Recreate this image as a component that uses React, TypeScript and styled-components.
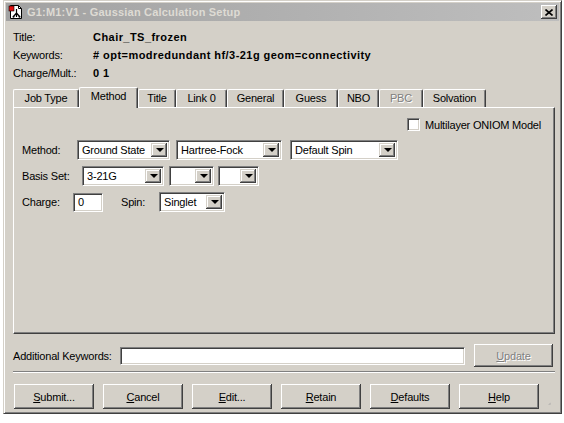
import React from 'react'
import styled, { createGlobalStyle } from 'styled-components'

const GlobalStyle = createGlobalStyle`
    html, body {
        margin: 0;
        padding: 0;
        background: #ffffff;
    }
    body {
        font-family: "Liberation Sans", Arial, sans-serif;
        font-size: 11px;
        letter-spacing: -0.2px;
        color: #000;
    }
`

const face = '#d4d0c8'
const shadow = '#808080'
const dark = '#404040'

const Window = styled.div`
    box-sizing: border-box;
    width: 559px;
    height: 414px;
    margin-left: 3px;
    background: ${face};
    border: 1px solid;
    border-color: ${face} ${dark} ${dark} ${face};
    box-shadow: inset 1px 1px #fff, inset -1px -1px ${shadow};
    padding: 2px;
    display: flex;
    flex-direction: column;
`
const TitleBar = styled.div`
    height: 18px;
    display: flex;
    align-items: center;
    padding: 0 2px 0 2px;
    background: linear-gradient(to right, #a2a2a2, #bebebe);
    color: #dedbd4;
    font-family: "Liberation Sans", Tahoma, sans-serif;
    font-weight: bold;
    font-size: 11px;
    gap: 3px;
`
const TitleText = styled.span`
    flex: 1;
    letter-spacing: 0.2px;
`
const CloseBox = styled.div`
    width: 16px;
    height: 14px;
    background: ${face};
    box-shadow: inset -1px -1px ${dark}, inset 1px 1px #fff, inset -2px -2px ${shadow};
    display: flex;
    align-items: center;
    justify-content: center;
`
const Body = styled.div`
    flex: 1;
    display: flex;
    flex-direction: column;
    padding: 7px 4px 0 7px;
`
const InfoGrid = styled.div`
    display: grid;
    grid-template-columns: 80px 1fr;
    grid-auto-rows: 18px;
    align-items: center;
`
const InfoValue = styled.span`
    font-weight: bold;
    letter-spacing: 0.45px;
`
const TabStrip = styled.div`
    display: flex;
    align-items: flex-end;
    height: 20px;
    margin-top: 5px;
    position: relative;
    z-index: 1;
`
const Tab = styled.div<{ $w: number; $active?: boolean; $off?: boolean }>`
    box-sizing: border-box;
    width: ${p => p.$w}px;
    height: ${p => (p.$active ? 21 : 18)}px;
    margin-bottom: ${p => (p.$active ? -1 : 0)}px;
    background: ${face};
    border-radius: 2px 2px 0 0;
    border-top: 1px solid #fff;
    border-left: 1px solid #fff;
    border-right: 1px solid ${dark};
    box-shadow: inset -1px 0 ${shadow};
    display: flex;
    justify-content: center;
    padding-top: 2px;
    color: ${p => (p.$off ? shadow : '#000')};
    text-shadow: ${p => (p.$off ? '1px 1px #fff' : 'none')};
`
const Panel = styled.div`
    box-sizing: border-box;
    width: 542px;
    height: 227px;
    border: 1px solid;
    border-color: #fff ${dark} ${dark} #fff;
    box-shadow: inset -1px -1px ${shadow};
    display: flex;
    flex-direction: column;
    padding: 10px 0 0 8px;
`
const CheckRow = styled.label`
    display: flex;
    align-items: center;
    gap: 5px;
    padding-left: 385px;
    height: 13px;
`
const CheckBox = styled.span`
    box-sizing: border-box;
    width: 13px;
    height: 13px;
    background: #fff;
    border: 1px solid;
    border-color: ${shadow} #fff #fff ${shadow};
    box-shadow: inset 1px 1px ${dark}, inset -1px -1px ${face};
`
const Rows = styled.div`
    display: flex;
    flex-direction: column;
    gap: 6px;
    margin-top: 9px;
`
const Row = styled.div`
    display: flex;
    align-items: center;
    height: 20px;
`
const Label = styled.span<{ $w: number }>`
    width: ${p => p.$w}px;
    flex-shrink: 0;
`
const Sunken = styled.div<{ $w: number; $h?: number }>`
    box-sizing: border-box;
    width: ${p => p.$w}px;
    height: ${p => p.$h ?? 20}px;
    background: #fff;
    border: 1px solid;
    border-color: ${shadow} #fff #fff ${shadow};
    box-shadow: inset 1px 1px ${dark}, inset -1px -1px ${face};
    display: flex;
    align-items: center;
    padding: 2px;
    flex-shrink: 0;
`
const ComboText = styled.span`
    flex: 1;
    padding-left: 2px;
    white-space: nowrap;
    overflow: hidden;
`
const DropButton = styled.span`
    width: 16px;
    height: 100%;
    background: ${face};
    box-shadow: inset -1px -1px ${dark}, inset 1px 1px ${face}, inset -2px -2px ${shadow}, inset 2px 2px #fff;
    display: flex;
    align-items: center;
    justify-content: center;
    &::after {
        content: '';
        border-left: 4px solid transparent;
        border-right: 4px solid transparent;
        border-top: 4px solid #000;
        margin-left: 1px;
    }
`
const Gap = styled.span<{ $w: number }>`
    width: ${p => p.$w}px;
    flex-shrink: 0;
`
const KeywordRow = styled.div`
    display: flex;
    align-items: center;
    height: 23px;
    margin-top: 10px;
`
const WinButton = styled.button<{ $w: number; $h: number; $off?: boolean }>`
    box-sizing: border-box;
    width: ${p => p.$w}px;
    height: ${p => p.$h}px;
    padding: 0;
    border: none;
    background: ${face};
    box-shadow: inset -1px -1px ${dark}, inset 1px 1px #fff, inset -2px -2px ${shadow}, inset 2px 2px ${face};
    font-family: "Liberation Sans", Arial, sans-serif;
    font-size: 11px;
    letter-spacing: -0.2px;
    color: ${p => (p.$off ? shadow : '#000')};
    text-shadow: ${p => (p.$off ? '1px 1px #fff' : 'none')};
    flex-shrink: 0;
    u { text-decoration: underline; }
`
const Separator = styled.div`
    width: 542px;
    height: 0;
    border-top: 1px solid ${shadow};
    border-bottom: 1px solid #fff;
    margin-top: 4px;
`
const ButtonRow = styled.div`
    display: flex;
    align-items: flex-end;
    gap: 9px;
    padding-left: 1px;
    margin-top: 11px;
`
const Grip = styled.svg`
    margin-left: auto;
    margin-right: 4px;
    margin-bottom: -1px;
`

function AppIcon() {
    return (
        <svg width="16" height="16" viewBox="0 0 16 16">
            <path d="M2.5 1.5h8l3 3v10h-11z" fill="#fff" stroke="#000" />
            <path d="M10.5 1.5v3h3" fill="none" stroke="#000" />
            <rect x="1" y="2" width="5" height="5" fill="#e01010" stroke="#000" strokeWidth="0.6" />
            <path d="M8.5 5v4M8.5 9l-3 3.5M8.5 9l3 3.5M8.5 9v4" stroke="#000" strokeWidth="1.2" fill="none" />
            <circle cx="5.5" cy="12.8" r="1" fill="#000" />
            <circle cx="11.5" cy="12.8" r="1" fill="#000" />
        </svg>
    )
}

function Combo({ w, value }: { w: number; value?: string }) {
    return (
        <Sunken $w={w}>
            <ComboText>{value}</ComboText>
            <DropButton />
        </Sunken>
    )
}

const tabs = [
    { name: 'Job Type', w: 66 },
    { name: 'Method', w: 59, active: true },
    { name: 'Title', w: 38 },
    { name: 'Link 0', w: 51 },
    { name: 'General', w: 57 },
    { name: 'Guess', w: 54 },
    { name: 'NBO', w: 41 },
    { name: 'PBC', w: 44, off: true },
    { name: 'Solvation', w: 63 },
]

const buttons = [
    { key: 'S', rest: 'ubmit...' },
    { key: 'C', rest: 'ancel' },
    { key: 'E', rest: 'dit...' },
    { key: 'R', rest: 'etain' },
    { key: 'D', rest: 'efaults' },
    { key: 'H', rest: 'elp' },
]

export default function App() {
    return (
        <>
            <GlobalStyle />
            <Window>
                <TitleBar>
                    <AppIcon />
                    <TitleText>G1:M1:V1 - Gaussian Calculation Setup</TitleText>
                    <CloseBox>
                        <svg width="8" height="7" viewBox="0 0 8 7">
                            <path d="M0.5 0.5l7 6M7.5 0.5l-7 6" stroke="#000" strokeWidth="1.6" />
                        </svg>
                    </CloseBox>
                </TitleBar>
                <Body>
                    <InfoGrid>
                        <span>Title:</span>
                        <InfoValue>Chair_TS_frozen</InfoValue>
                        <span>Keywords:</span>
                        <InfoValue># opt=modredundant hf/3-21g geom=connectivity</InfoValue>
                        <span>Charge/Mult.:</span>
                        <InfoValue>0 1</InfoValue>
                    </InfoGrid>
                    <TabStrip>
                        {tabs.map(t => (
                            <Tab key={t.name} $w={t.w} $active={t.active} $off={t.off}>{t.name}</Tab>
                        ))}
                    </TabStrip>
                    <Panel>
                        <CheckRow>
                            <CheckBox />
                            <span>Multilayer ONIOM Model</span>
                        </CheckRow>
                        <Rows>
                            <Row>
                                <Label $w={55}>Method:</Label>
                                <Combo w={93} value="Ground State" />
                                <Gap $w={6} />
                                <Combo w={106} value="Hartree-Fock" />
                                <Gap $w={8} />
                                <Combo w={108} value="Default Spin" />
                            </Row>
                            <Row>
                                <Label $w={60}>Basis Set:</Label>
                                <Combo w={82} value="3-21G" />
                                <Gap $w={5} />
                                <Combo w={45} />
                                <Gap $w={4} />
                                <Combo w={41} />
                            </Row>
                            <Row>
                                <Label $w={51}>Charge:</Label>
                                <Sunken $w={30} $h={19}>
                                    <ComboText>0</ComboText>
                                </Sunken>
                                <Gap $w={18} />
                                <Label $w={38}>Spin:</Label>
                                <Combo w={66} value="Singlet" />
                            </Row>
                        </Rows>
                    </Panel>
                    <KeywordRow>
                        <Label $w={107}>Additional Keywords:</Label>
                        <Sunken $w={345} $h={18} />
                        <Gap $w={9} />
                        <WinButton $w={79} $h={23} $off>
                            <u>U</u>pdate
                        </WinButton>
                    </KeywordRow>
                    <Separator />
                    <ButtonRow>
                        {buttons.map(b => (
                            <WinButton key={b.key} $w={80} $h={25}>
                                <u>{b.key}</u>{b.rest}
                            </WinButton>
                        ))}
                        <Grip width="13" height="13" viewBox="0 0 13 13">
                            <path d="M12 1L1 12M12 5L5 12M12 9L9 12" stroke="#fff" strokeWidth="1" />
                            <path d="M12 2L2 12M12 3L3 12M12 6L6 12M12 7L7 12M12 10L10 12M12 11L11 12" stroke={shadow} strokeWidth="1" />
                        </Grip>
                    </ButtonRow>
                </Body>
            </Window>
        </>
    )
}
